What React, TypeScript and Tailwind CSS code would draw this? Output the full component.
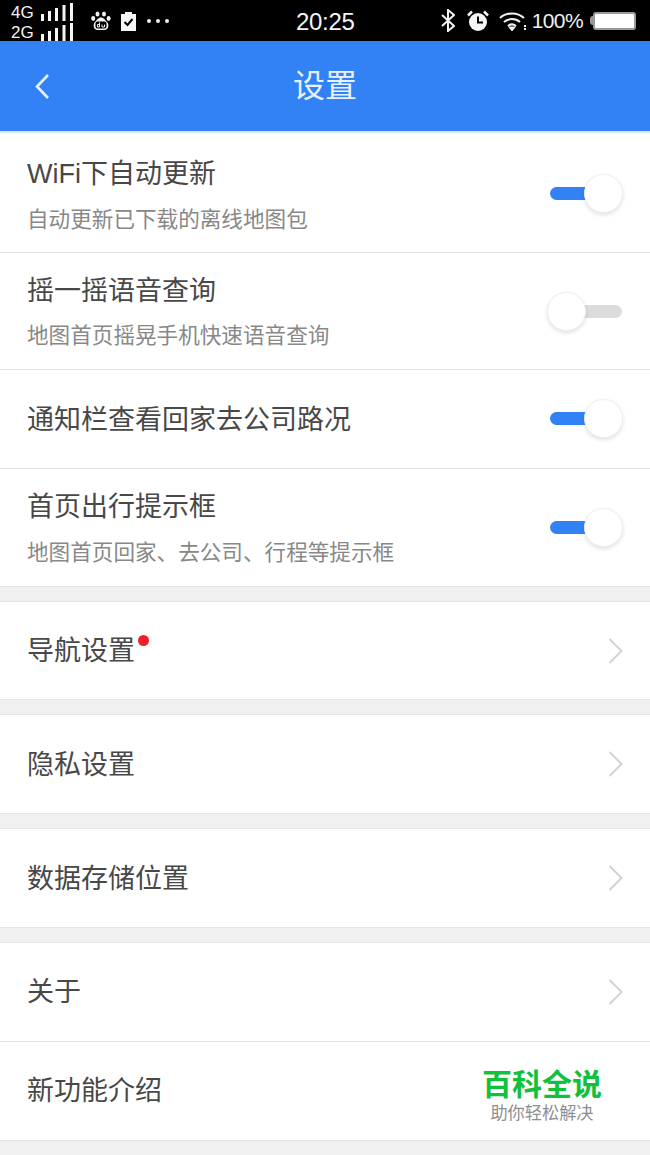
const sans = "font-['Liberation_Sans','Noto_Sans_CJK_SC',sans-serif]";

function Toggle({ on, low }: { on: boolean; low?: boolean }) {
  return (
    <div className={`relative w-[76px] h-[42px] shrink-0 ${low ? "mt-[2px]" : ""}`}>
      <div className={`absolute top-[14px] left-[3px] w-[72px] h-[13px] rounded-full ${on ? "bg-[#3282f6]" : "bg-[#dcdcdc]"}`} />
      <div
        className={`absolute top-[1px] w-[39px] h-[39px] rounded-full bg-white border border-[#efefef] shadow-[0_2px_4px_rgba(0,0,0,0.12)] ${on ? "right-0" : "left-0"}`}
      />
    </div>
  );
}

function Chevron() {
  return (
    <svg width="15" height="26" viewBox="0 0 15 26" fill="none" className="shrink-0">
      <path d="M1.500 1 L13.500 13 L1.500 25" stroke="#d2d2d2" strokeWidth="2" />
    </svg>
  );
}

const toggles = [
  { title: "WiFi下自动更新", sub: "自动更新已下载的离线地图包", on: true, low: true, h: "h-[120px]", tPad: "pt-[23px]", sGap: "mt-[14px]" },
  { title: "摇一摇语音查询", sub: "地图首页摇晃手机快速语音查询", on: false, low: true, h: "h-[117px]", tPad: "pt-[20px]", sGap: "mt-[13px]" },
  { title: "通知栏查看回家去公司路况", sub: "", on: true, low: false, h: "h-[99px]", tPad: "pt-[2px]", sGap: "" },
  { title: "首页出行提示框", sub: "地图首页回家、去公司、行程等提示框", on: true, low: false, h: "h-[118px]", tPad: "pt-[20px]", sGap: "mt-[14px]" },
];

function Signal() {
  return (
    <svg width="33" height="18" viewBox="0 0 33 18" className="ml-[7px]" fill="#f5f5f5">
      <rect x="0" y="11" width="3" height="7" />
      <rect x="7" y="8" width="3" height="10" />
      <rect x="14" y="5" width="3" height="13" />
      <rect x="21.500" y="2" width="3" height="16" />
      <rect x="29" y="0" width="3" height="18" />
    </svg>
  );
}

function StatusBar() {
  return (
    <div className="h-[41px] bg-black text-white flex items-center relative">
      <div className="w-[82px] pl-[11px] flex flex-col leading-none text-[17px] text-[#f2f2f2]">
        <div className="flex items-end h-[20px]">
          <span>4G</span>
          <Signal />
        </div>
        <div className="flex items-end h-[20px]">
          <span>2G</span>
          <Signal />
        </div>
      </div>
      {/* baidu paw */}
      <svg width="20" height="20" viewBox="0 0 20 20" className="ml-[9px]" fill="#f2f2f2">
        <ellipse cx="6.500" cy="3" rx="2" ry="2.600" />
        <ellipse cx="13" cy="3" rx="2" ry="2.600" />
        <ellipse cx="2.200" cy="7.500" rx="2" ry="2.400" />
        <ellipse cx="17.600" cy="7.500" rx="2" ry="2.400" />
        <path d="M10 6.500c3 0 4 2.500 6 4.500 2.500 2.500 1.500 8-2.500 8h-7C2.500 19 1.500 13.500 4 11c2-2 3-4.500 6-4.500z" />
        <rect x="4.500" y="10.500" width="11" height="7" rx="2" fill="#000" />
        <path d="M8.500 11.500v4.500H6.500v-2.500h2M11 13.500v2.500h2.500v-2.500" stroke="#f2f2f2" strokeWidth="1" fill="none" />
      </svg>
      <svg width="15" height="20" viewBox="0 0 15 20" className="ml-[10px]">
        <path d="M0 3h4V1h7v2h4v17H0z" fill="#f5f5f5" />
        <path d="M3.500 11l3 3 5-6" stroke="#000" strokeWidth="2" fill="none" />
      </svg>
      <div className="ml-[11px] flex gap-[5px]">
        <div className="w-[4px] h-[4px] rounded-full bg-[#eeeeee]" />
        <div className="w-[4px] h-[4px] rounded-full bg-[#eeeeee]" />
        <div className="w-[4px] h-[4px] rounded-full bg-[#eeeeee]" />
      </div>
      <span className="absolute left-[296px] top-[7px] text-[24px] leading-[29px] text-[#f4f4f4] tracking-[-0.3px]">20:25</span>
      <div className="ml-auto flex items-center pr-[14px]">
        <svg width="14" height="23" viewBox="0 0 14 23" fill="none" stroke="#f2f2f2" strokeWidth="2">
          <path d="M1 6l12 11-6 5V1l6 5L1 17" />
        </svg>
        <svg width="22" height="22" viewBox="0 0 22 22" className="ml-[12px]">
          <circle cx="11" cy="12" r="9" fill="#f5f5f5" />
          <path d="M1 5.500L5 1.500M21 5.500L17 1.500" stroke="#f5f5f5" strokeWidth="2.500" />
          <path d="M11 6.500V12.500H16" stroke="#000" strokeWidth="2" fill="none" />
        </svg>
        <svg width="28" height="20" viewBox="0 0 28 20" fill="none" stroke="#f2f2f2" strokeWidth="2" className="ml-[10px]">
          <path d="M1 7C7.500 1 18.500 1 25 7" />
          <path d="M5 11C9.500 7 16.500 7 21 11" />
          <path d="M9 15c2.500-2 5.500-2 8 0" />
          <path d="M11 16.500l2 2.500 2-2.500z" fill="#f2f2f2" />
          <path d="M26 14v5" strokeDasharray="2 1" />
        </svg>
        <span className="ml-[5px] text-[21px] leading-none text-[#f0f0f0] tracking-[-0.6px]">100%</span>
        <div className="ml-[7px] w-[3px] h-[9px] bg-[#999999] rounded-l-sm" />
        <div className="w-[43px] h-[18px] rounded-[3px] border-2 border-[#9a9a9a] bg-white" />
      </div>
    </div>
  );
}

function NavRow({ title, dot, h, border, tPad }: { title: string; dot?: boolean; h: string; border?: boolean; tPad?: string }) {
  return (
    <div className={`${h} bg-white flex items-center pl-[27px] pr-[27px] ${border ? "border-b border-[#e2e2e2]" : ""}`}>
      <div className={tPad}>
        <span className="block relative text-[27px] leading-none text-[#484848]">
          {title}
          {dot && <span className="absolute -right-[14px] -top-[3px] w-[11px] h-[11px] rounded-full bg-[#f0202a]" />}
        </span>
      </div>
      <div className="ml-auto">
        <Chevron />
      </div>
    </div>
  );
}

function Gap() {
  return <div className="h-[16px] bg-[#f0f0f0] border-y border-[#e4e4e4]" />;
}

export default function App() {
  return (
    <div className={`w-[650px] h-[1155px] overflow-hidden bg-[#f0f0f0] ${sans}`}>
      <StatusBar />
      <div className="h-[90px] bg-[#3282f6] relative flex items-center justify-center">
        <svg width="16" height="28" viewBox="0 0 16 28" fill="none" className="absolute left-[34px] top-[32px]">
          <path d="M14 2 L3 13.500 L14 25" stroke="#e8f2ff" strokeWidth="2.600" />
        </svg>
        <span className="text-[32px] leading-none text-[#e8f2ff]">设置</span>
      </div>
      <div className="h-[2px] bg-[#d9e8fb]" />

      {toggles.map((t) => (
        <div key={t.title} className={`${t.h} bg-white flex items-center pl-[27px] pr-[27px] border-b border-[#e2e2e2]`}>
          <div className={`flex-1 ${t.tPad} self-stretch flex flex-col ${t.sub ? "" : "justify-center"}`}>
            <div className="text-[27px] leading-[36px] text-[#484848]">{t.title}</div>
            {t.sub && <div className={`${t.sGap} text-[21.600px] leading-[28px] text-[#888888]`}>{t.sub}</div>}
          </div>
          <Toggle on={t.on} low={t.low} />
        </div>
      ))}

      <div className="h-[14px]" />
      <div className="border-t border-[#e4e4e4]" />
      <NavRow title="导航设置" dot h="h-[97px]" tPad="pt-[2px]" />
      <Gap />
      <NavRow title="隐私设置" h="h-[98px]" tPad="pt-[2px]" />
      <Gap />
      <NavRow title="数据存储位置" h="h-[98px]" tPad="pt-[2px]" />
      <Gap />
      <NavRow title="关于" h="h-[99px]" border />
      <div className="h-[99px] bg-white flex items-center pl-[27px] border-b border-[#e2e2e2] relative">
        <span className="text-[27px] leading-none text-[#484848]">新功能介绍</span>
        <div className="absolute left-[482px] top-[26px] w-[120px] flex flex-col items-center">
          <span className="text-[30px] leading-[34px] font-bold text-[#10c13c] whitespace-nowrap">百科全说</span>
          <span className="text-[17.200px] leading-[22px] text-[#8f8f8f] whitespace-nowrap">助你轻松解决</span>
        </div>
      </div>
    </div>
  );
}
